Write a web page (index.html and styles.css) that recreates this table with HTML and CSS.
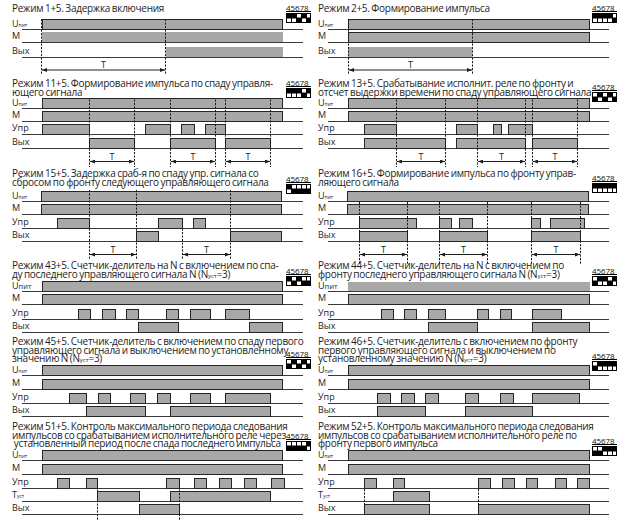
FILE: index.html
```html
<!DOCTYPE html>
<html lang="ru">
<head>
<meta charset="utf-8">
<title>Режимы работы</title>
<link rel="stylesheet" href="styles.css">
</head>
<body>
<svg class="defs" width="0" height="0" aria-hidden="true">
  <defs>
    <marker id="ah" viewBox="0 0 5 4" refX="5" refY="2" markerWidth="5" markerHeight="4" markerUnits="userSpaceOnUse" orient="auto-start-reverse">
      <path d="M0,0 L5,2 L0,4 z" fill="#1e1e1e"/>
    </marker>
  </defs>
</svg>
<main class="sheet">

<!-- P1 -->
<section class="panel ra">
  <h2 class="title l1">Режим 1+5. Задержка включения</h2>
  <svg class="diagram" width="306" height="66" viewBox="0 0 306 66">
    <line class="base" x1="22" x2="303" y1="16.5" y2="16.5"/>
    <line class="base" x1="22" x2="303" y1="29.5" y2="29.5"/>
    <line class="base" x1="22" x2="303" y1="44.5" y2="44.5"/>
    <rect class="s" x="42.5" y="6.5" width="240" height="10"/>
    <rect class="f" x="42" y="19" width="241" height="10"/>
    <rect class="f" x="166" y="34" width="117" height="10"/>
    <line class="dash" x1="41.5" x2="41.5" y1="6" y2="62"/>
    <line class="dash" x1="165.5" x2="165.5" y1="6" y2="62"/>
    <line class="arr" x1="42" x2="165" y1="57" y2="57"/>
    <text class="tl" x="103.5" y="55">T</text>
    <text class="lbl" x="12" y="14">U<tspan class="sub">пит</tspan></text>
    <text class="lbl" x="12" y="26">M</text>
    <text class="lbl" x="12" y="41">Вых</text>
  </svg>
  <div class="dip d0"><div class="num">45678</div>
    <svg class="sw" width="25" height="10" viewBox="0 0 25 10"><rect width="25" height="10"/><rect class="w" x="1" y="5.5" width="4" height="3.5"/><rect class="w" x="6" y="5.5" width="4" height="3.5"/><rect class="w" x="11" y="1" width="4" height="3.5"/><rect class="w" x="16" y="5.5" width="4" height="3.5"/><rect class="w" x="21" y="1" width="3" height="3.5"/></svg>
  </div>
</section>

<!-- P2 -->
<section class="panel ra">
  <h2 class="title l1">Режим 2+5. Формирование импульса</h2>
  <svg class="diagram" width="306" height="66" viewBox="0 0 306 66">
    <line class="base" x1="22" x2="303" y1="16.5" y2="16.5"/>
    <line class="base" x1="22" x2="303" y1="29.5" y2="29.5"/>
    <line class="base" x1="22" x2="303" y1="44.5" y2="44.5"/>
    <rect class="s" x="42.5" y="6.5" width="241" height="10"/>
    <rect class="s" x="42.5" y="19.5" width="241" height="10"/>
    <rect class="f" x="42" y="34" width="124" height="10"/>
    <line class="dash" x1="42.5" x2="42.5" y1="6" y2="62"/>
    <line class="dash" x1="166.5" x2="166.5" y1="6" y2="62"/>
    <line class="arr" x1="43" x2="166" y1="57" y2="57"/>
    <text class="tl" x="104.5" y="55">T</text>
    <text class="lbl" x="12" y="14">U<tspan class="sub">пит</tspan></text>
    <text class="lbl" x="12" y="26">M</text>
    <text class="lbl" x="12" y="41">Вых</text>
  </svg>
  <div class="dip d0"><div class="num">45678</div>
    <svg class="sw" width="25" height="10" viewBox="0 0 25 10"><rect width="25" height="10"/><rect class="w" x="1" y="5.5" width="4" height="3.5"/><rect class="w" x="6" y="5.5" width="4" height="3.5"/><rect class="w" x="11" y="5.5" width="4" height="3.5"/><rect class="w" x="16" y="5.5" width="4" height="3.5"/><rect class="w" x="21" y="1" width="3" height="3.5"/></svg>
  </div>
</section>

<!-- P3 -->
<section class="panel">
  <h2 class="title l2">Режим 11+5. Формирование импульса по спаду управля-<br>ющего сигнала</h2>
  <svg class="diagram" width="306" height="73" viewBox="0 0 306 73">
    <line class="base" x1="22" x2="303" y1="12.5" y2="12.5"/>
    <line class="base" x1="22" x2="303" y1="25.5" y2="25.5"/>
    <line class="base" x1="22" x2="303" y1="38.5" y2="38.5"/>
    <line class="base" x1="22" x2="303" y1="52.5" y2="52.5"/>
    <rect class="s" x="42.5" y="2.5" width="240" height="10"/>
    <rect class="s" x="42.5" y="15.5" width="240" height="10"/>
    <rect class="s" x="42.5" y="28.5" width="47" height="10"/>
    <rect class="s" x="145.5" y="28.5" width="25" height="10"/>
    <rect class="s" x="181.5" y="28.5" width="13" height="10"/>
    <rect class="s" x="205.5" y="28.5" width="20" height="10"/>
    <rect class="s" x="89.5" y="42.5" width="45" height="10"/>
    <rect class="s" x="170.5" y="42.5" width="45" height="10"/>
    <rect class="s" x="225.5" y="42.5" width="45" height="10"/>
    <line class="dash" x1="89.5" x2="89.5" y1="3.5" y2="71"/>
    <line class="dash" x1="134.5" x2="134.5" y1="3.5" y2="71"/>
    <line class="dash" x1="170.5" x2="170.5" y1="3.5" y2="71"/>
    <line class="dash" x1="215.5" x2="215.5" y1="3.5" y2="71"/>
    <line class="dash" x1="225.5" x2="225.5" y1="3.5" y2="71"/>
    <line class="dash" x1="270.5" x2="270.5" y1="3.5" y2="71"/>
    <line class="arr" x1="90" x2="134" y1="65.5" y2="65.5"/>
    <line class="arr" x1="171" x2="215" y1="65.5" y2="65.5"/>
    <line class="arr" x1="226" x2="270" y1="65.5" y2="65.5"/>
    <text class="tl" x="112" y="63.5">T</text>
    <text class="tl" x="193" y="63.5">T</text>
    <text class="tl" x="248" y="63.5">T</text>
    <text class="lbl" x="12" y="10">U<tspan class="sub">пит</tspan></text>
    <text class="lbl" x="12" y="22">M</text>
    <text class="lbl" x="12" y="35">Упр</text>
    <text class="lbl" x="12" y="49">Вых</text>
  </svg>
  <div class="dip d0"><div class="num">45678</div>
    <svg class="sw" width="25" height="10" viewBox="0 0 25 10"><rect width="25" height="10"/><rect class="w" x="1" y="5.5" width="4" height="3.5"/><rect class="w" x="6" y="5.5" width="4" height="3.5"/><rect class="w" x="11" y="5.5" width="4" height="3.5"/><rect class="w" x="16" y="1" width="4" height="3.5"/><rect class="w" x="21" y="5.5" width="3" height="3.5"/></svg>
  </div>
</section>

<!-- P4 -->
<section class="panel">
  <h2 class="title l2">Режим 13+5. Срабатывание исполнит. реле по фронту и<br>отсчет выдержки времени по спаду управляющего сигнала</h2>
  <svg class="diagram" width="306" height="73" viewBox="0 0 306 73">
    <line class="base" x1="22" x2="303" y1="12.5" y2="12.5"/>
    <line class="base" x1="22" x2="303" y1="25.5" y2="25.5"/>
    <line class="base" x1="22" x2="303" y1="38.5" y2="38.5"/>
    <line class="base" x1="22" x2="303" y1="52.5" y2="52.5"/>
    <rect class="s" x="42.5" y="2.5" width="241" height="10"/>
    <rect class="s" x="42.5" y="15.5" width="241" height="10"/>
    <rect class="s" x="58.5" y="28.5" width="32" height="10"/>
    <rect class="s" x="150.5" y="28.5" width="21" height="10"/>
    <rect class="s" x="187.5" y="28.5" width="8" height="10"/>
    <rect class="s" x="202.5" y="28.5" width="24" height="10"/>
    <rect class="s" x="58.5" y="42.5" width="81" height="10"/>
    <rect class="s" x="150.5" y="42.5" width="69" height="10"/>
    <rect class="s" x="226.5" y="42.5" width="45" height="10"/>
    <line class="dash" x1="90.5" x2="90.5" y1="3.5" y2="71"/>
    <line class="dash" x1="139.5" x2="139.5" y1="3.5" y2="71"/>
    <line class="dash" x1="171.5" x2="171.5" y1="3.5" y2="71"/>
    <line class="dash" x1="219.5" x2="219.5" y1="3.5" y2="71"/>
    <line class="dash" x1="226.5" x2="226.5" y1="3.5" y2="71"/>
    <line class="dash" x1="271.5" x2="271.5" y1="3.5" y2="71"/>
    <line class="arr" x1="91" x2="139" y1="65.5" y2="65.5"/>
    <line class="arr" x1="172" x2="219" y1="65.5" y2="65.5"/>
    <line class="arr" x1="227" x2="271" y1="65.5" y2="65.5"/>
    <text class="tl" x="115" y="63.5">T</text>
    <text class="tl" x="195.5" y="63.5">T</text>
    <text class="tl" x="249" y="63.5">T</text>
    <text class="lbl" x="12" y="10">U<tspan class="sub">пит</tspan></text>
    <text class="lbl" x="12" y="22">M</text>
    <text class="lbl" x="12" y="35">Упр</text>
    <text class="lbl" x="12" y="49">Вых</text>
  </svg>
  <div class="dip d4"><div class="num">45678</div>
    <svg class="sw" width="25" height="10" viewBox="0 0 25 10"><rect width="25" height="10"/><rect class="w" x="1" y="1" width="4" height="3.5"/><rect class="w" x="6" y="5.5" width="4" height="3.5"/><rect class="w" x="11" y="1" width="4" height="3.5"/><rect class="w" x="16" y="5.5" width="4" height="3.5"/><rect class="w" x="21" y="1" width="3" height="3.5"/></svg>
  </div>
</section>

<!-- P5 -->
<section class="panel">
  <h2 class="title l2">Режим 15+5. Задержка сраб-я по спаду упр. сигнала со<br>сбросом по фронту следующего управляющего сигнала</h2>
  <svg class="diagram" width="306" height="75" viewBox="0 0 306 75">
    <line class="base" x1="22" x2="303" y1="15.5" y2="15.5"/>
    <line class="base" x1="22" x2="303" y1="28.5" y2="28.5"/>
    <line class="base" x1="22" x2="303" y1="42.5" y2="42.5"/>
    <line class="base" x1="22" x2="303" y1="55.5" y2="55.5"/>
    <rect class="s" x="41.5" y="5.5" width="240" height="10"/>
    <rect class="s" x="41.5" y="18.5" width="240" height="10"/>
    <rect class="s" x="57.5" y="32.5" width="32" height="10"/>
    <rect class="s" x="158.5" y="32.5" width="24" height="10"/>
    <rect class="s" x="193.5" y="32.5" width="12" height="10"/>
    <rect class="s" x="136.5" y="45.5" width="22" height="10"/>
    <rect class="s" x="230.5" y="45.5" width="51" height="10"/>
    <line class="dash" x1="89.5" x2="89.5" y1="4" y2="73"/>
    <line class="dash" x1="136.5" x2="136.5" y1="4" y2="73"/>
    <line class="dash" x1="182.5" x2="182.5" y1="32" y2="73"/>
    <line class="dash" x1="230.5" x2="230.5" y1="4" y2="73"/>
    <line class="arr" x1="90" x2="136" y1="68.5" y2="68.5"/>
    <line class="arr" x1="183" x2="230" y1="68.5" y2="68.5"/>
    <text class="tl" x="113" y="66.5">T</text>
    <text class="tl" x="206.5" y="66.5">T</text>
    <text class="lbl" x="12" y="13">U<tspan class="sub">пит</tspan></text>
    <text class="lbl" x="12" y="25">M</text>
    <text class="lbl" x="12" y="39">Упр</text>
    <text class="lbl" x="12" y="52">Вых</text>
  </svg>
  <div class="dip d6"><div class="num">45678</div>
    <svg class="sw" width="25" height="10" viewBox="0 0 25 10"><rect width="25" height="10"/><rect class="w" x="1" y="5.5" width="4" height="3.5"/><rect class="w" x="6" y="1" width="4" height="3.5"/><rect class="w" x="11" y="1" width="4" height="3.5"/><rect class="w" x="16" y="1" width="4" height="3.5"/><rect class="w" x="21" y="1" width="3" height="3.5"/></svg>
  </div>
</section>

<!-- P6 -->
<section class="panel">
  <h2 class="title l2">Режим 16+5. Формирование импульса по фронту управ-<br>ляющего сигнала</h2>
  <svg class="diagram" width="306" height="75" viewBox="0 0 306 75">
    <line class="base" x1="22" x2="303" y1="15.5" y2="15.5"/>
    <line class="base" x1="22" x2="303" y1="28.5" y2="28.5"/>
    <line class="base" x1="22" x2="303" y1="42.5" y2="42.5"/>
    <line class="base" x1="22" x2="303" y1="55.5" y2="55.5"/>
    <rect class="s" x="41.5" y="5.5" width="241" height="10"/>
    <rect class="s" x="41.5" y="18.5" width="241" height="10"/>
    <rect class="s" x="53.5" y="32.5" width="57" height="10"/>
    <rect class="s" x="133.5" y="32.5" width="12" height="10"/>
    <rect class="s" x="153.5" y="32.5" width="13" height="10"/>
    <rect class="s" x="225.5" y="32.5" width="9" height="10"/>
    <rect class="s" x="244.5" y="32.5" width="34" height="10"/>
    <rect class="s" x="53.5" y="45.5" width="48" height="10"/>
    <rect class="s" x="133.5" y="45.5" width="48" height="10"/>
    <rect class="s" x="225.5" y="45.5" width="49" height="10"/>
    <line class="dash" x1="53.5" x2="53.5" y1="16" y2="79"/>
    <line class="dash" x1="101.5" x2="101.5" y1="16" y2="79"/>
    <line class="dash" x1="133.5" x2="133.5" y1="16" y2="79"/>
    <line class="dash" x1="181.5" x2="181.5" y1="16" y2="79"/>
    <line class="dash" x1="225.5" x2="225.5" y1="16" y2="79"/>
    <line class="dash" x1="274.5" x2="274.5" y1="16" y2="79"/>
    <line class="arr" x1="54" x2="101" y1="68.5" y2="68.5"/>
    <line class="arr" x1="134" x2="181" y1="68.5" y2="68.5"/>
    <line class="arr" x1="226" x2="274" y1="68.5" y2="68.5"/>
    <text class="tl" x="77.5" y="66.5">T</text>
    <text class="tl" x="157.5" y="66.5">T</text>
    <text class="tl" x="250" y="66.5">T</text>
    <text class="lbl" x="12" y="13">U<tspan class="sub">пит</tspan></text>
    <text class="lbl" x="12" y="25">M</text>
    <text class="lbl" x="12" y="39">Упр</text>
    <text class="lbl" x="12" y="52">Вых</text>
  </svg>
  <div class="dip d5"><div class="num">45678</div>
    <svg class="sw" width="25" height="10" viewBox="0 0 25 10"><rect width="25" height="10"/><rect class="w" x="1" y="5.5" width="4" height="3.5"/><rect class="w" x="6" y="5.5" width="4" height="3.5"/><rect class="w" x="11" y="5.5" width="4" height="3.5"/><rect class="w" x="16" y="5.5" width="4" height="3.5"/><rect class="w" x="21" y="5.5" width="3" height="3.5"/></svg>
  </div>
</section>

<!-- P7 -->
<section class="panel">
  <h2 class="title l2">Режим 43+5. Счетчик-делитель на N с включением по спа-<br>ду последнего управляющего сигнала N (N<span class="s">уст</span>=3)</h2>
  <svg class="diagram" width="306" height="59" viewBox="0 0 306 59">
    <line class="base" x1="22" x2="303" y1="13.5" y2="13.5"/>
    <line class="base" x1="22" x2="303" y1="26.5" y2="26.5"/>
    <line class="base" x1="22" x2="303" y1="41.5" y2="41.5"/>
    <line class="base" x1="22" x2="303" y1="54.5" y2="54.5"/>
    <rect class="s" x="42.5" y="3.5" width="240" height="10"/>
    <rect class="s" x="42.5" y="16.5" width="240" height="10"/>
    <rect class="s" x="78.5" y="31.5" width="12" height="10"/>
    <rect class="s" x="102.5" y="31.5" width="13" height="10"/>
    <rect class="s" x="126.5" y="31.5" width="12" height="10"/>
    <rect class="s" x="166.5" y="31.5" width="12" height="10"/>
    <rect class="s" x="190.5" y="31.5" width="20" height="10"/>
    <rect class="s" x="225.5" y="31.5" width="24" height="10"/>
    <rect class="s" x="138.5" y="44.5" width="40" height="10"/>
    <rect class="s" x="249.5" y="44.5" width="33" height="10"/>
    <text class="lbl" x="12" y="11">U<tspan class="sub2">пит</tspan></text>
    <text class="lbl" x="12" y="23">M</text>
    <text class="lbl" x="12" y="38">Упр</text>
    <text class="lbl" x="12" y="51">Вых</text>
  </svg>
  <div class="dip d6"><div class="num">45678</div>
    <svg class="sw" width="25" height="10" viewBox="0 0 25 10"><rect width="25" height="10"/><rect class="w" x="1" y="5.5" width="4" height="3.5"/><rect class="w" x="6" y="1" width="4" height="3.5"/><rect class="w" x="11" y="5.5" width="4" height="3.5"/><rect class="w" x="16" y="1" width="4" height="3.5"/><rect class="w" x="21" y="1" width="3" height="3.5"/></svg>
  </div>
</section>

<!-- P8 -->
<section class="panel">
  <h2 class="title l2">Режим 44+5. Счетчик-делитель на N с включением по<br>фронту последнего управляющего сигнала N (N<span class="s">уст</span>=3)</h2>
  <svg class="diagram" width="306" height="59" viewBox="0 0 306 59">
    <line class="base" x1="22" x2="303" y1="13.5" y2="13.5"/>
    <line class="base" x1="22" x2="303" y1="26.5" y2="26.5"/>
    <line class="base" x1="22" x2="303" y1="41.5" y2="41.5"/>
    <line class="base" x1="22" x2="303" y1="54.5" y2="54.5"/>
    <rect class="f" x="42" y="4" width="242" height="9"/>
    <rect class="s" x="42.5" y="16.5" width="241" height="10"/>
    <rect class="s" x="75.5" y="31.5" width="12" height="10"/>
    <rect class="s" x="98.5" y="31.5" width="12" height="10"/>
    <rect class="s" x="122.5" y="31.5" width="17" height="10"/>
    <rect class="s" x="171.5" y="31.5" width="11" height="10"/>
    <rect class="s" x="194.5" y="31.5" width="11" height="10"/>
    <rect class="s" x="226.5" y="31.5" width="29" height="10"/>
    <rect class="s" x="122.5" y="44.5" width="49" height="10"/>
    <rect class="s" x="226.5" y="44.5" width="57" height="10"/>
    <text class="lbl" x="12" y="11">U<tspan class="sub2">пит</tspan></text>
    <text class="lbl" x="12" y="23">M</text>
    <text class="lbl" x="12" y="38">Упр</text>
    <text class="lbl" x="12" y="51">Вых</text>
  </svg>
  <div class="dip d6"><div class="num">45678</div>
    <svg class="sw" width="25" height="10" viewBox="0 0 25 10"><rect width="25" height="10"/><rect class="w" x="1" y="1" width="4" height="3.5"/><rect class="w" x="6" y="5.5" width="4" height="3.5"/><rect class="w" x="11" y="5.5" width="4" height="3.5"/><rect class="w" x="16" y="1" width="4" height="3.5"/><rect class="w" x="21" y="5.5" width="3" height="3.5"/></svg>
  </div>
</section>

<!-- P9 -->
<section class="panel">
  <h2 class="title l3">Режим 45+5. Счетчик-делитель с включением по спаду первого<br>управляющего сигнала и выключением по установленному<br>значению N (N<span class="s">уст</span>=3)</h2>
  <svg class="diagram" width="306" height="59" viewBox="0 0 306 59">
    <line class="base" x1="22" x2="303" y1="12.5" y2="12.5"/>
    <line class="base" x1="22" x2="303" y1="26.5" y2="26.5"/>
    <line class="base" x1="22" x2="303" y1="40.5" y2="40.5"/>
    <line class="base" x1="22" x2="303" y1="53.5" y2="53.5"/>
    <rect class="s" x="42.5" y="2.5" width="240" height="10"/>
    <rect class="s" x="42.5" y="16.5" width="240" height="10"/>
    <rect class="s" x="69.5" y="30.5" width="17" height="10"/>
    <rect class="s" x="98.5" y="30.5" width="12" height="10"/>
    <rect class="s" x="130.5" y="30.5" width="15" height="10"/>
    <rect class="s" x="157.5" y="30.5" width="13" height="10"/>
    <rect class="s" x="190.5" y="30.5" width="20" height="10"/>
    <rect class="s" x="225.5" y="30.5" width="45" height="10"/>
    <rect class="s" x="86.5" y="43.5" width="59" height="10"/>
    <rect class="s" x="170.5" y="43.5" width="100" height="10"/>
    <text class="lbl" x="12" y="10">U<tspan class="sub">пит</tspan></text>
    <text class="lbl" x="12" y="23">M</text>
    <text class="lbl" x="12" y="37">Упр</text>
    <text class="lbl" x="12" y="50">Вых</text>
  </svg>
  <div class="dip d13"><div class="num">45678</div>
    <svg class="sw" width="25" height="10" viewBox="0 0 25 10"><rect width="25" height="10"/><rect class="w" x="1" y="1" width="4" height="3.5"/><rect class="w" x="6" y="5.5" width="4" height="3.5"/><rect class="w" x="11" y="1" width="4" height="3.5"/><rect class="w" x="16" y="5.5" width="4" height="3.5"/><rect class="w" x="21" y="1" width="3" height="3.5"/></svg>
  </div>
</section>

<!-- P10 -->
<section class="panel">
  <h2 class="title l3">Режим 46+5. Счетчик-делитель с включением по фронту<br>первого управляющего сигнала и выключением по<br>установленному значению N (N<span class="s">уст</span>=3)</h2>
  <svg class="diagram" width="306" height="59" viewBox="0 0 306 59">
    <line class="base" x1="22" x2="303" y1="12.5" y2="12.5"/>
    <line class="base" x1="22" x2="303" y1="26.5" y2="26.5"/>
    <line class="base" x1="22" x2="303" y1="40.5" y2="40.5"/>
    <line class="base" x1="22" x2="303" y1="53.5" y2="53.5"/>
    <rect class="s" x="42.5" y="2.5" width="241" height="10"/>
    <rect class="s" x="42.5" y="16.5" width="241" height="10"/>
    <rect class="s" x="71.5" y="30.5" width="13" height="10"/>
    <rect class="s" x="95.5" y="30.5" width="13" height="10"/>
    <rect class="s" x="119.5" y="30.5" width="13" height="10"/>
    <rect class="s" x="159.5" y="30.5" width="13" height="10"/>
    <rect class="s" x="194.5" y="30.5" width="13" height="10"/>
    <rect class="s" x="226.5" y="30.5" width="47" height="10"/>
    <rect class="s" x="71.5" y="43.5" width="48" height="10"/>
    <rect class="s" x="159.5" y="43.5" width="67" height="10"/>
    <text class="lbl" x="12" y="10">U<tspan class="sub">пит</tspan></text>
    <text class="lbl" x="12" y="23">M</text>
    <text class="lbl" x="12" y="37">Упр</text>
    <text class="lbl" x="12" y="50">Вых</text>
  </svg>
  <div class="dip d15"><div class="num">45678</div>
    <svg class="sw" width="25" height="10" viewBox="0 0 25 10"><rect width="25" height="10"/><rect class="w" x="1" y="1" width="4" height="3.5"/><rect class="w" x="6" y="5.5" width="4" height="3.5"/><rect class="w" x="11" y="5.5" width="4" height="3.5"/><rect class="w" x="16" y="5.5" width="4" height="3.5"/><rect class="w" x="21" y="5.5" width="3" height="3.5"/></svg>
  </div>
</section>

<!-- P11 -->
<section class="panel">
  <h2 class="title l3">Режим 51+5. Контроль максимального периода следования<br>импульсов со срабатыванием исполнительного реле через<br>&nbsp;установленный период после спада последнего импульса</h2>
  <svg class="diagram" width="306" height="74" viewBox="0 0 306 74">
    <line class="base" x1="22" x2="303" y1="12.5" y2="12.5"/>
    <line class="base" x1="22" x2="303" y1="26.5" y2="26.5"/>
    <line class="base" x1="22" x2="303" y1="40.5" y2="40.5"/>
    <line class="base" x1="22" x2="303" y1="53.5" y2="53.5"/>
    <line class="base" x1="22" x2="303" y1="66.5" y2="66.5"/>
    <rect class="s" x="42.5" y="2.5" width="240" height="10"/>
    <rect class="s" x="42.5" y="16.5" width="240" height="10"/>
    <rect class="s" x="57.5" y="30.5" width="12" height="10"/>
    <rect class="s" x="86.5" y="30.5" width="11" height="10"/>
    <rect class="s" x="166.5" y="30.5" width="13" height="10"/>
    <rect class="s" x="194.5" y="30.5" width="12" height="10"/>
    <rect class="s" x="219.5" y="30.5" width="12" height="10"/>
    <rect class="s" x="244.5" y="30.5" width="12" height="10"/>
    <rect class="s" x="271.5" y="30.5" width="13" height="10"/>
    <rect class="s" x="97.5" y="43.5" width="42" height="10"/>
    <rect class="s" x="170.5" y="43.5" width="100" height="10"/>
    <rect class="s" x="139.5" y="56.5" width="40" height="10"/>
    <line class="dash" x1="97.5" x2="97.5" y1="31" y2="72"/>
    <line class="dash" x1="179.5" x2="179.5" y1="31" y2="72"/>
    <text class="lbl" x="12" y="10">U<tspan class="sub">пит</tspan></text>
    <text class="lbl" x="12" y="23">M</text>
    <text class="lbl" x="12" y="37">Упр</text>
    <text class="lbl" x="12" y="50">T<tspan class="sub">уст</tspan></text>
    <text class="lbl" x="12" y="63">Вых</text>
  </svg>
  <div class="dip d10"><div class="num">45678</div>
    <svg class="sw" width="25" height="10" viewBox="0 0 25 10"><rect width="25" height="10"/><rect class="w" x="1" y="1" width="4" height="3.5"/><rect class="w" x="6" y="1" width="4" height="3.5"/><rect class="w" x="11" y="1" width="4" height="3.5"/><rect class="w" x="16" y="1" width="4" height="3.5"/><rect class="w" x="21" y="5.5" width="3" height="3.5"/></svg>
  </div>
</section>

<!-- P12 -->
<section class="panel">
  <h2 class="title l3">Режим 52+5. Контроль максимального периода следования<br>импульсов со срабатыванием исполнительного реле по<br>фронту первого импульса</h2>
  <svg class="diagram" width="306" height="74" viewBox="0 0 306 74">
    <line class="base" x1="22" x2="303" y1="12.5" y2="12.5"/>
    <line class="base" x1="22" x2="303" y1="26.5" y2="26.5"/>
    <line class="base" x1="22" x2="303" y1="40.5" y2="40.5"/>
    <line class="base" x1="22" x2="303" y1="53.5" y2="53.5"/>
    <line class="base" x1="22" x2="303" y1="66.5" y2="66.5"/>
    <rect class="s" x="42.5" y="2.5" width="241" height="10"/>
    <rect class="s" x="42.5" y="16.5" width="241" height="10"/>
    <rect class="s" x="58.5" y="30.5" width="12" height="10"/>
    <rect class="s" x="87.5" y="30.5" width="11" height="10"/>
    <rect class="s" x="172.5" y="30.5" width="12" height="10"/>
    <rect class="s" x="196.5" y="30.5" width="12" height="10"/>
    <rect class="s" x="220.5" y="30.5" width="11" height="10"/>
    <rect class="s" x="249.5" y="30.5" width="11" height="10"/>
    <rect class="s" x="271.5" y="30.5" width="12" height="10"/>
    <rect class="s" x="87.5" y="43.5" width="36" height="10"/>
    <rect class="s" x="58.5" y="56.5" width="65" height="10"/>
    <rect class="s" x="172.5" y="56.5" width="111" height="10"/>
    <line class="dash" x1="58.5" x2="58.5" y1="41" y2="66"/>
    <line class="dash" x1="172.5" x2="172.5" y1="41" y2="66"/>
    <text class="lbl" x="12" y="10">U<tspan class="sub">пит</tspan></text>
    <text class="lbl" x="12" y="23">M</text>
    <text class="lbl" x="12" y="37">Упр</text>
    <text class="lbl" x="12" y="50">T<tspan class="sub">уст</tspan></text>
    <text class="lbl" x="12" y="63">Вых</text>
  </svg>
  <div class="dip d15"><div class="num">45678</div>
    <svg class="sw" width="25" height="10" viewBox="0 0 25 10"><rect width="25" height="10"/><rect class="w" x="1" y="1" width="4" height="3.5"/><rect class="w" x="6" y="1" width="4" height="3.5"/><rect class="w" x="11" y="5.5" width="4" height="3.5"/><rect class="w" x="16" y="5.5" width="4" height="3.5"/><rect class="w" x="21" y="5.5" width="3" height="3.5"/></svg>
  </div>
</section>

</main>
</body>
</html>
```
FILE: styles.css
```css
* { box-sizing: border-box; }
html, body { margin: 0; padding: 0; background: #ffffff; }
body {
  font-family: "Open Sans", "Noto Sans", "DejaVu Sans", sans-serif;
  color: #1e1e1e;
  width: 635px;
  height: 522px;
  overflow: hidden;
}
.defs { display: block; width: 0; height: 0; }

.sheet {
  display: grid;
  grid-template-columns: 306px 306px;
  align-items: start;
}

.panel {
  display: grid;
  grid-template-columns: 286px 20px;
  grid-template-rows: auto auto;
}
.ra { padding-top: 4px; }

.title {
  grid-column: 1;
  grid-row: 1;
  margin: 0;
  padding-left: 12px;
  font-size: 10px;
  font-weight: 400;
  line-height: 8.5px;
  letter-spacing: -0.28px;
  word-spacing: -0.6px;
  white-space: nowrap;
  overflow: visible;
}
.title .s { font-size: 6px; letter-spacing: 0; }
.l1 { height: 9px; }
.l2 { height: 17px; }
.l3 { height: 26px; }

.diagram {
  grid-column: 1 / 3;
  grid-row: 2;
  display: block;
  overflow: visible;
}

.dip {
  grid-column: 2;
  grid-row: 1 / 3;
  align-self: start;
  width: 25px;
}
.d0 { margin-top: 0; }
.d4 { margin-top: 4px; }
.d5 { margin-top: 5px; }
.d6 { margin-top: 6px; }
.d10 { margin-top: 10px; }
.d13 { margin-top: 13px; }
.d15 { margin-top: 15px; }

.num {
  font-size: 8px;
  line-height: 7px;
  height: 8px;
  letter-spacing: -0.1px;
  border-bottom: 1px solid #000;
  color: #111;
}
.sw { display: block; margin-top: 1px; fill: #000; }
.sw .w { fill: #ffffff; }

/* diagram parts */
.base { stroke: #3a3a3a; stroke-width: 1; }
.s { fill: #a8a8a8; stroke: #262626; stroke-width: 1; }
.f { fill: #a8a8a8; }
.dash { stroke: #1a1a1a; stroke-width: 1; stroke-dasharray: 2.2 1.3; }
.arr { stroke: #1e1e1e; stroke-width: 1; marker-start: url(#ah); marker-end: url(#ah); }
.lbl { font-size: 9px; fill: #1e1e1e; }
.lbl .sub { font-size: 5px; }
.lbl .sub2 { font-size: 7.5px; }
.tl { font-size: 9px; fill: #1e1e1e; text-anchor: middle; }
```
